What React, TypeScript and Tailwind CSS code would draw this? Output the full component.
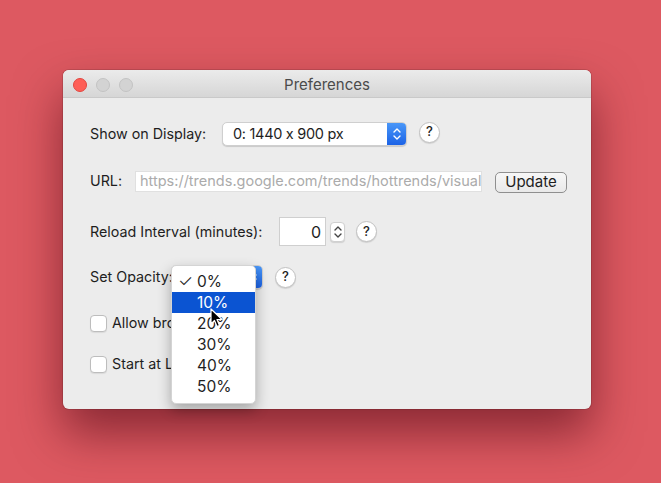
import type { ReactNode } from "react";

const font = { fontFamily: 'Inter, "Noto Sans", sans-serif', fontFeatureSettings: '"calt" 0' };

function Help() {
  return (
    <div className="flex h-[21px] w-[21px] items-center justify-center rounded-full border border-[#c2c2c2] bg-white text-[13px] font-medium text-[#222] shadow-[0_1px_1px_rgba(0,0,0,0.12)]">
      ?
    </div>
  );
}

function Chevrons({ color }: { color: string }) {
  return (
    <svg width="8" height="14" viewBox="0 0 8 14" fill="none" stroke={color} strokeWidth="1.4" strokeLinecap="round" strokeLinejoin="round">
      <path d="M1 5 L4 2 L7 5" />
      <path d="M1 9 L4 12 L7 9" />
    </svg>
  );
}

function Select({ width, children }: { width: number; children?: ReactNode }) {
  return (
    <div
      className="flex h-[24px] items-center overflow-hidden rounded-[5px] border border-[#cfcfcf] bg-white shadow-[0_1px_1px_rgba(0,0,0,0.15)]"
      style={{ width }}
    >
      <div className="flex-1 whitespace-nowrap pl-[10px] text-[14.5px] tracking-[-0.3px] text-[#1e1e1e]">{children}</div>
      <div className="flex h-full w-[19px] items-center justify-center bg-gradient-to-b from-[#4a97f8] to-[#1c62e6]">
        <Chevrons color="#fff" />
      </div>
    </div>
  );
}

function Checkbox({ label }: { label: string }) {
  return (
    <div className="flex h-[18px] items-center">
      <div className="h-[17px] w-[17px] rounded-[4px] border border-[#bdbdbd] bg-white shadow-[0_1px_1px_rgba(0,0,0,0.08)]" />
      <span className="ml-[5px] whitespace-nowrap text-[14.3px] text-[#1e1e1e]">{label}</span>
    </div>
  );
}

const options = ["0%", "10%", "20%", "30%", "40%", "50%"];

export default function App() {
  return (
    <div className="h-[483px] w-[661px] overflow-hidden bg-[#dd5961] pl-[63px] pt-[70px]" style={font}>
      <div className="relative h-[339px] w-[528px] rounded-[6px] bg-[#ececec] shadow-[0_24px_48px_rgba(70,0,15,0.55),0_0_0_1px_rgba(0,0,0,0.12)]">
        {/* title bar */}
        <div className="relative flex h-[28px] items-center rounded-t-[6px] border-b border-[#c9c9c9] bg-gradient-to-b from-[#ebebeb] to-[#d6d6d6] pl-[10px] pt-[2px]">
          <div className="flex gap-[9px]">
            <div className="h-[14px] w-[14px] rounded-full border border-[#e2463f] bg-[#fe5f57]" />
            <div className="h-[14px] w-[14px] rounded-full border border-[#c3c3c3] bg-[#d3d3d3]" />
            <div className="h-[14px] w-[14px] rounded-full border border-[#c3c3c3] bg-[#d3d3d3]" />
          </div>
          <div className="absolute inset-0 flex items-center justify-center pt-[3px] text-[15px] text-[#4b4b4b]">Preferences</div>
        </div>

        {/* body */}
        <div className="flex flex-col whitespace-nowrap pl-[27px] text-[14.3px] text-[#1e1e1e]">
          <div className="mt-[24px] flex h-[24px] items-center">
            <span className="w-[132px]">Show on Display:</span>
            <Select width={185}>0: 1440 x 900 px</Select>
            <div className="ml-[12px] -mt-[4px]">
              <Help />
            </div>
          </div>

          <div className="mt-[24px] flex h-[22px] items-center">
            <span className="w-[45px]">URL:</span>
            <div className="flex h-[21px] w-[347px] items-center overflow-hidden border border-[#e0e0e0] bg-white pl-[4px] text-[14.5px] text-[#ababab]">
              https://trends.google.com/trends/hottrends/visual
            </div>
            <div className="ml-[13px] mt-[2px] flex h-[21px] w-[72px] items-center justify-center rounded-[5px] border border-[#8f8f8f] bg-gradient-to-b from-[#f7f7f7] to-[#e9e9e9] text-[15px]">
              Update
            </div>
          </div>

          <div className="mt-[25px] flex h-[29px] items-center">
            <span className="w-[189px]">Reload Interval (minutes):</span>
            <div className="flex h-[29px] w-[47px] items-center justify-end border border-[#cfcfcf] bg-white pr-[4px] text-[16px]">
              0
            </div>
            <div className="ml-[4px] flex h-[20px] w-[15px] items-center justify-center rounded-[4px] border border-[#d0d0d0] bg-white shadow-[0_1px_1px_rgba(0,0,0,0.12)]">
              <Chevrons color="#444" />
            </div>
            <div className="ml-[11px]">
              <Help />
            </div>
          </div>

          <div className="mt-[19px] flex h-[24px] items-center">
            <span className="w-[81px]">Set Opacity:</span>
            <Select width={92} />
            <div className="ml-[12px]">
              <Help />
            </div>
          </div>

          <div className="mt-[25px]">
            <Checkbox label="Allow browsing" />
          </div>
          <div className="mt-[23px]">
            <Checkbox label="Start at Login" />
          </div>
        </div>

        {/* popup menu */}
        <div className="absolute left-[108px] top-[195px] h-[139px] w-[85px] rounded-[5px] border border-[#d4d4d4] bg-white pt-[5px] shadow-[0_6px_14px_rgba(0,0,0,0.3)]">
          {options.map((o, i) => (
            <div
              key={o}
              className={
                i === 1
                  ? "relative flex h-[21px] items-center bg-[#0b54d2] pl-[25px] text-[15.5px] text-white"
                  : "relative flex h-[21px] items-center pl-[25px] text-[15.5px] text-[#1e1e1e]"
              }
            >
              {i === 0 && <span className="absolute left-[6px] text-[17px] font-light">✓</span>}
              {o}
            </div>
          ))}
        </div>

        {/* cursor */}
        <svg className="absolute left-[147px] top-[238px]" width="14" height="20" viewBox="0 0 14 20">
          <path d="M1 1 L1 16 L4.5 12.5 L7 18.5 L9.5 17.5 L7 11.5 L12 11.5 Z" fill="#000" stroke="#fff" strokeWidth="1.2" strokeLinejoin="round" />
        </svg>
      </div>
    </div>
  );
}
